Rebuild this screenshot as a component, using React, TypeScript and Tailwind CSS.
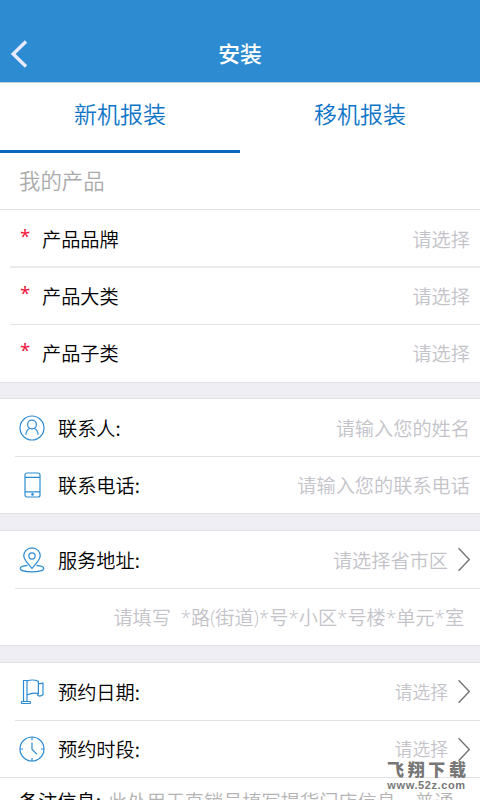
import React from "react";
import { ReactNode } from "react";

const Gap = ({ className = "" }: { className?: string }) => (
  <div className={`${className} shrink-0 bg-[#efeef4] border-y border-[#e2e2e4]`}></div>
);

const Chevron = () => (
  <svg className="w-3 h-[25px] shrink-0" viewBox="0 0 12 25" fill="none" stroke="#707070" strokeWidth="1.3">
    <path d="M0.6 1.2 L11.3 12.5 L0.6 23.8" />
  </svg>
);

const UserIcon = () => (
  <svg className="w-[26px] h-[26px]" viewBox="0 0 26 26" fill="none" stroke="#2b8bd2" strokeWidth="1.2">
    <circle cx="13" cy="13" r="12" />
    <circle cx="13" cy="9.5" r="4.4" />
    <path d="M6.8 19.7 C7.2 16.4 8.7 14.2 11 13.3 M15 13.3 C17.3 14.2 18.8 16.4 19.2 19.7" />
  </svg>
);

const PhoneIcon = () => (
  <svg className="w-[26px] h-[26px]" viewBox="0 0 26 26" fill="none" stroke="#2b8bd2" strokeWidth="1.2">
    <rect x="6" y="1" width="15" height="24" rx="2" />
    <path d="M6 5.3 H21 M6 19.8 H21" />
    <circle cx="13.5" cy="22.4" r="0.7" fill="#2b8bd2" />
  </svg>
);

const PinIcon = () => (
  <svg className="w-[26px] h-[26px]" viewBox="0 0 26 26" fill="none" stroke="#2b8bd2" strokeWidth="1.2">
    <path d="M13 21.5 C10 17.5 4.8 13.2 4.8 8.8 A8.2 8 0 0 1 21.2 8.8 C21.2 13.2 16 17.5 13 21.5 Z" />
    <circle cx="13" cy="9" r="3.1" />
    <path d="M8.6 18.4 C4.3 18.8 1.2 20 1.2 21.4 C1.2 23.3 6 24.8 13 24.8 C20 24.8 24.8 23.3 24.8 21.4 C24.8 20 21.7 18.8 17.4 18.4" />
  </svg>
);

const FlagIcon = () => (
  <svg className="w-[26px] h-[26px]" viewBox="0 0 26 26" fill="none" stroke="#2b8bd2" strokeWidth="1.2">
    <path d="M4.5 22.5 V1.5 H8 V22.5" />
    <rect x="2.4" y="22.5" width="9" height="2" rx="0.5" />
    <path d="M8 1.9 C12 0.6 16 0.8 19.4 2.4 V14.6 C16 13.8 12 14 8 16" />
    <path d="M19.4 4.2 C20.5 4.9 22 4.7 24 4.2 V15.8 C22 17.2 20 17.3 18.8 16.2 V14.4" />
  </svg>
);

const ClockIcon = () => (
  <svg className="w-[26px] h-[26px]" viewBox="0 0 26 26" fill="none" stroke="#2b8bd2" strokeWidth="1.2">
    <circle cx="13" cy="13" r="12" />
    <path d="M13 1 V4 M13 22 V25 M1 13 H4 M22 13 H25 M13 6.5 V13.2 L18 18.4" />
  </svg>
);

const ProductRow = ({ label }: { label: string }) => (
  <div className="flex items-center h-full pl-[10px] pr-[10px]">
    <span className="w-[22px] pb-[5px] text-[#f5153c] text-[18.5px] font-normal font-['Noto_Sans',sans-serif]">*</span>
    <span className="flex-1 text-black">{label}</span>
    <span className="text-[#c3c3c9]">请选择</span>
  </div>
);

const FieldRow = ({
  icon,
  label,
  placeholder,
  small,
  chevron,
}: {
  icon: ReactNode;
  label: string;
  placeholder: string;
  small?: boolean;
  chevron?: boolean;
}) => (
  <div className="flex items-center h-full pl-1 pr-[10px]">
    <span className="w-[39px]">{icon}</span>
    <span className="flex-1 text-black">{label}</span>
    <span className={`${small ? "text-[17.8px] pb-[2px]" : ""} text-[#c3c3c9]`}>{placeholder}</span>
    {chevron && (
      <span className="pl-[10px]">
        <Chevron />
      </span>
    )}
  </div>
);

export default function App() {
  return (
    <div className="relative flex flex-col w-[480px] h-[800px] overflow-hidden bg-white text-[19.2px] leading-7 font-[350] whitespace-nowrap font-['Noto_Sans_CJK_SC',sans-serif]">
      <header className="grid grid-cols-[80px_1fr_80px] items-center h-[83px] shrink-0 pt-[25px] bg-[#2d8cd1] border-b border-[#c3cdd5]">
        <svg className="w-[18px] h-7 ml-[10px]" viewBox="0 0 18 28" fill="none" stroke="#e8eaff" strokeWidth="3.4">
          <path d="M16 1.5 L3.2 14 L16 26.5" />
        </svg>
        <h1 className="pb-[2px] text-center text-[21.8px] font-medium text-white">安装</h1>
      </header>

      <nav className="flex h-[70px] shrink-0 text-center text-[23px] text-[#0f75c8]">
        <div className="w-1/2 pt-4 border-b-3 border-[#0768bd]">新机报装</div>
        <div className="w-1/2 pt-4">移机报装</div>
      </nav>

      <div className="h-[57px] shrink-0 pt-[13px] pl-[19px] text-[21.4px] text-[#aaa] border-b border-[#e2e2e4]">
        我的产品
      </div>

      <section className="shrink-0 pl-[10px]">
        <div className="h-[58px] pt-[1px] border-b-2 border-[#ebebed]">
          <ProductRow label="产品品牌" />
        </div>
        <div className="h-[57px] pb-[1px] border-b border-[#e2e2e4]">
          <ProductRow label="产品大类" />
        </div>
        <div className="h-[57px] pb-[2px]">
          <ProductRow label="产品子类" />
        </div>
      </section>

      <Gap className="h-[17px]" />

      <section className="shrink-0 pl-[15px]">
        <div className="h-[58px] border-b border-[#e2e2e4]">
          <FieldRow icon={<UserIcon />} label="联系人:" placeholder="请输入您的姓名" />
        </div>
        <div className="h-14">
          <FieldRow icon={<PhoneIcon />} label="联系电话:" placeholder="请输入您的联系电话" />
        </div>
      </section>

      <Gap className="h-[18px]" />

      <section className="shrink-0 pl-[15px]">
        <div className="h-[58px] border-b border-[#e2e2e4]">
          <FieldRow icon={<PinIcon />} label="服务地址:" placeholder="请选择省市区" chevron />
        </div>
        <div className="flex items-center justify-end h-14 pt-[2px] pr-4 text-[#c3c3c9] tracking-[-0.08px] whitespace-pre font-['Open_Sans','Noto_Sans_CJK_SC',sans-serif]">
          {"请填写  *路(街道)*号*小区*号楼*单元*室"}
        </div>
      </section>

      <Gap className="h-[18px]" />

      <section className="shrink-0 pl-[15px]">
        <div className="h-[58px] border-b border-[#e2e2e4]">
          <FieldRow icon={<FlagIcon />} label="预约日期:" placeholder="请选择" small chevron />
        </div>
        <div className="h-14">
          <FieldRow icon={<ClockIcon />} label="预约时段:" placeholder="请选择" small chevron />
        </div>
      </section>

      <div className="flex shrink-0 pt-[9px] pl-[19px] border-t border-[#e2e2e4]">
        <span className="font-normal text-black">备注信息:</span>
        <span className="pl-[7px] text-[#b4b4b4]">此处用于直销员填写提货门店信息，普通</span>
      </div>

      <div className="absolute left-[387px] top-[757px] w-[79px] text-center text-[#777]">
        <div className="flex justify-between text-[17px] leading-[23px] font-black">
          <span>飞</span>
          <span>翔</span>
          <span>下</span>
          <span>载</span>
        </div>
        <div className="pt-[1px] text-[11px] leading-[9px] font-bold tracking-[0.6px] font-['Liberation_Sans',sans-serif]">
          www.52z.com
        </div>
      </div>
    </div>
  );
}
